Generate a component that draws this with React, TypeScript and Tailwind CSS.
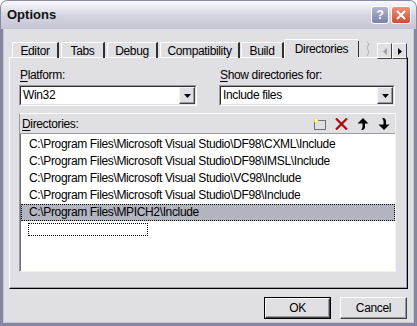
import React from "react";

const rows = [
  "C:\\Program Files\\Microsoft Visual Studio\\DF98\\CXML\\Include",
  "C:\\Program Files\\Microsoft Visual Studio\\DF98\\IMSL\\Include",
  "C:\\Program Files\\Microsoft Visual Studio\\VC98\\Include",
  "C:\\Program Files\\Microsoft Visual Studio\\DF98\\Include",
];

const DropButton = () => (
  <div className="flex w-[16px] items-center justify-center border border-t-[#f4f4f4] border-l-[#f4f4f4] border-b-[#404040] border-r-[#404040] bg-[#e0dfe3] shadow-[inset_-1px_-1px_#9a9a9e]">
    <svg width="7" height="4" viewBox="0 0 7 4">
      <path d="M0 0h7L3.5 4z" fill="#000" />
    </svg>
  </div>
);

const ComboBox = ({ value }: { value: string }) => (
  <div className="flex h-[21px] border border-t-[#9a9a9e] border-l-[#9a9a9e] border-b-white border-r-white">
    <div className="flex flex-1 border border-t-[#303030] border-l-[#303030] border-b-[#e0dfe3] border-r-[#e0dfe3] bg-white">
      <span className="flex-1 pl-[2px] leading-[17px]">{value}</span>
      <DropButton />
    </div>
  </div>
);

const Tab = ({ label, w, ml }: { label: string; w: string; ml: string }) => (
  <div
    className={`${w} ${ml} flex h-[16px] items-center justify-center rounded-tl-[2px] border-l border-t border-white border-r-2 border-r-[#303030] pt-[1px]`}
  >
    {label}
  </div>
);

const Label = ({ u, rest }: { u: string; rest: string }) => (
  <div className="leading-[14px]">
    <span className="underline underline-offset-[2px]">{u}</span>
    {rest}
  </div>
);

const NewIcon = () => (
  <svg width="13" height="12" viewBox="0 0 13 12">
    <rect x="1.5" y="2.5" width="11" height="9" fill="none" stroke="#000" strokeDasharray="1 1" />
    <path d="M3 0v5M0.5 2.5h5M1 0.8l4 3.4M5 0.8l-4 3.4" stroke="#f8e030" strokeWidth="1" />
    <rect x="2" y="1" width="2" height="3" fill="#fffbd0" />
  </svg>
);

const DeleteIcon = () => (
  <svg width="13" height="12" viewBox="0 0 13 12">
    <path d="M1 0.5l11 11M12 0.5l-11 11" stroke="#a80c0c" strokeWidth="2.2" />
  </svg>
);

const UpIcon = () => (
  <svg width="12" height="12" viewBox="0 0 12 12">
    <path d="M6 0L11.5 5.5H8V9Q8 11 6 12H4Q5.5 10.5 5.5 8.5V5.5H0.5Z" fill="#000" />
  </svg>
);

const DownIcon = () => (
  <svg width="12" height="12" viewBox="0 0 12 12">
    <path d="M6 12L11.5 6.5H8V3Q8 1 6 0H4Q5.5 1.5 5.5 3.5V6.5H0.5Z" fill="#000" />
  </svg>
);

const Button = ({ label, def }: { label: string; def?: boolean }) => (
  <div
    className={`flex h-[22px] w-[67px] ${def ? "border border-black" : ""}`}
  >
    <div className="flex flex-1 items-center justify-center border border-t-white border-l-white border-b-[#404040] border-r-[#404040] bg-[#e0dfe3] shadow-[inset_-1px_-1px_#9a9a9e]">
      {label}
    </div>
  </div>
);

export default function App() {
  return (
    <div className="flex h-[326px] w-[417px] flex-col overflow-hidden rounded-t-[7px] bg-[#e0dfe3] font-['Liberation_Sans',Arial,sans-serif] text-[12px] tracking-[-0.35px] text-black">
      {/* title bar */}
      <div className="flex h-[29px] items-center rounded-t-[7px] border border-b-0 border-[#8a8aa4] bg-gradient-to-b from-[#fbfbfd] via-[#d6d6e2] to-[#c4c4d4] pl-[6px] pr-[5px]">
        <span className="flex-1 text-[13px] font-bold tracking-normal text-[#111]">Options</span>
        <div className="mr-[2px] flex h-[18px] w-[18px] items-center justify-center rounded-[3px] border border-white bg-gradient-to-b from-[#b4b8d4] to-[#7c80a4] text-[12px] font-bold text-white">
          ?
        </div>
        <div className="flex h-[18px] w-[20px] items-center justify-center rounded-[3px] border border-white bg-gradient-to-b from-[#f0907a] to-[#d04a30]">
          <svg width="10" height="10" viewBox="0 0 10 10">
            <path d="M1 1l8 8M9 1l-8 8" stroke="#fff" strokeWidth="2" />
          </svg>
        </div>
      </div>

      {/* body */}
      <div className="flex flex-1 flex-col border-x-[3px] border-b-[3px] border-[#8586a0] px-[6px] pt-[10px] pb-[4px] shadow-[inset_1px_0_#c8c8d6,inset_-1px_0_#c8c8d6,inset_0_-1px_#c8c8d6]">
        {/* tabs */}
        <div className="relative z-10 flex h-[19px] items-end">
          <Tab label="Editor" w="w-[47px]" ml="ml-[3px]" />
          <Tab label="Tabs" w="w-[44px]" ml="ml-[2px]" />
          <Tab label="Debug" w="w-[51px]" ml="ml-[2px]" />
          <Tab label="Compatibility" w="w-[80px]" ml="ml-[2px]" />
          <Tab label="Build" w="w-[43px]" ml="ml-[1px]" />
          <div className="-mb-[1px] flex h-[20px] w-[74px] items-center justify-center rounded-tl-[2px] border-l border-t border-white bg-[#e0dfe3] pb-[2px]">
            Directories
          </div>
          <div className="mb-[1px] flex h-[16px] w-[18px] items-center justify-center self-end border-l border-[#303030]">
            <svg width="6" height="14" viewBox="0 0 6 14">
              <path d="M2 0Q5 2 3 4T3 8T3 12L2 14" fill="none" stroke="#b0b0b8" />
            </svg>
          </div>
          <div className="mb-[-1px] ml-[1px] flex h-[16px] self-end">
            <div className="flex w-[15px] items-center justify-center border border-t-white border-l-white border-b-[#404040] border-r-[#404040]">
              <svg width="4" height="7" viewBox="0 0 4 7">
                <path d="M4 0v7L0 3.5z" fill="#a0a0a8" />
              </svg>
            </div>
            <div className="flex w-[15px] items-center justify-center border border-t-white border-l-white border-b-[#404040] border-r-[#404040]">
              <svg width="4" height="7" viewBox="0 0 4 7">
                <path d="M0 0v7L4 3.5z" fill="#000" />
              </svg>
            </div>
          </div>
        </div>

        {/* page */}
        <div className="-mt-[1px] flex h-[232px] flex-col border border-t-white border-l-white border-b-black border-r-black px-[9px] pt-[10px] shadow-[inset_-1px_-1px_#a0a0a6]">
          <div className="flex">
            <div className="flex w-[178px] flex-col gap-[3px]">
              <div className="pl-[1px]">
                <Label u="P" rest="latform:" />
              </div>
              <ComboBox value="Win32" />
            </div>
            <div className="ml-[22px] flex w-[176px] flex-col gap-[3px]">
              <div className="pl-[1px]">
                <Label u="S" rest="how directories for:" />
              </div>
              <ComboBox value="Include files" />
            </div>
          </div>

          <div className="mt-[7px] flex h-[159px] w-[377px] flex-col border border-t-white border-l-[#9a9a9e] border-r-[#f2f2e6] border-b-[#f2f2e6]">
            <div className="flex h-[20px] items-center border-b border-[#9a9a9e] pl-[2px] pr-[5px]">
              <span className="flex-1">
                <Label u="D" rest="irectories:" />
              </span>
              <div className="flex items-center gap-[9px]">
                <NewIcon />
                <DeleteIcon />
                <UpIcon />
                <DownIcon />
              </div>
            </div>
            <div className="flex flex-1 flex-col border-l border-[#6e6e72] bg-white pt-[2px]">
              {rows.map((r) => (
                <div key={r} className="h-[17px] pl-[8px] leading-[17px]">
                  {r}
                </div>
              ))}
              <div className="h-[17px] border border-dotted border-black bg-[#b2b4bf] pl-[7px] leading-[15px]">
                C:\Program Files\MPICH2\Include
              </div>
              <div className="ml-[7px] mt-[2px] h-[13px] w-[120px] border border-dotted border-black" />
            </div>
          </div>
        </div>

        {/* buttons */}
        <div className="mt-[8px] flex justify-end gap-[9px] pr-[1px]">
          <Button label="OK" def />
          <Button label="Cancel" />
        </div>
      </div>
    </div>
  );
}
